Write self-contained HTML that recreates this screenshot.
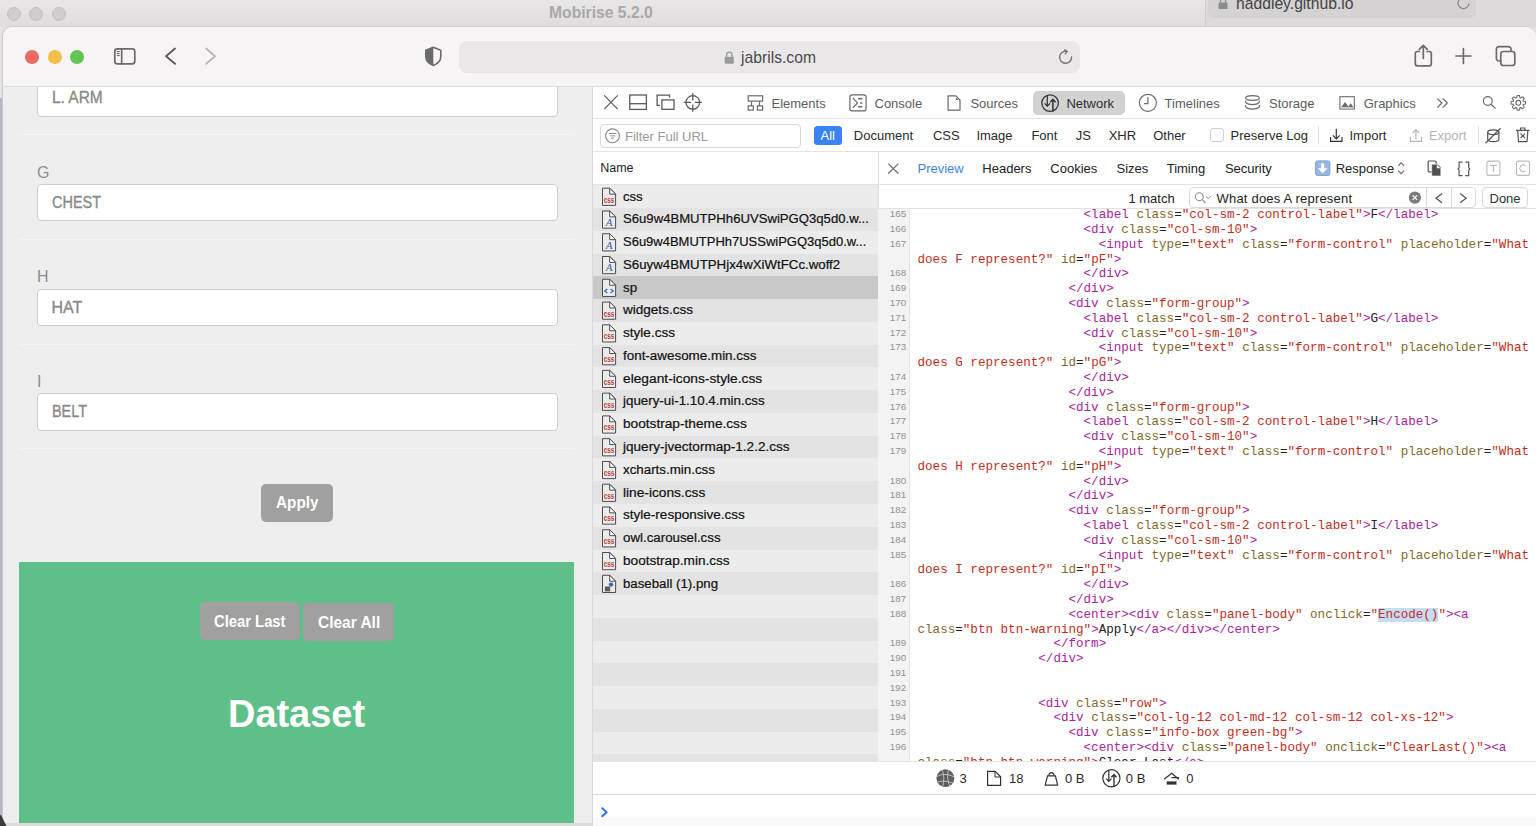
<!DOCTYPE html>
<html><head><meta charset="utf-8">
<style>
*{box-sizing:border-box;margin:0;padding:0}
html,body{width:1536px;height:826px;overflow:hidden;background:#e4e2e3;font-family:"Liberation Sans",sans-serif}
.a{position:absolute}
.t{position:absolute;white-space:pre;line-height:1}
svg{position:absolute;overflow:visible}
.cl{font-family:"Liberation Mono",monospace;font-size:12.58px;line-height:14.8px;height:14.8px;white-space:pre;color:#000}
.cl i{font-style:normal}
.g{color:#a8259b}.n{color:#82692c}.s{color:#c22d22}.x{color:#222}
.hl{background:#c7dbf5}
.ln{font-family:"Liberation Sans",sans-serif;font-size:9.8px;line-height:14.8px;height:14.8px;text-align:right;color:#929292;padding-top:0.3px}

</style></head><body>
<!-- background window title bar -->
<div class="a" style="left:0;top:0;width:1536px;height:27px;background:linear-gradient(#e8e6e7,#dedcdd)"></div>
<div class="a" style="left:7px;top:7px;width:14px;height:14px;border-radius:50%;background:#cfcdce;border:0.5px solid #c2c0c1"></div>
<div class="a" style="left:29px;top:7px;width:14px;height:14px;border-radius:50%;background:#cfcdce;border:0.5px solid #c2c0c1"></div>
<div class="a" style="left:52px;top:7px;width:14px;height:14px;border-radius:50%;background:#cfcdce;border:0.5px solid #c2c0c1"></div>
<div class="t" style="left:549px;top:5px;font-size:15.7px;font-weight:bold;color:#a9a8a8">Mobirise 5.2.0</div>
<!-- haddley window behind -->
<div class="a" style="left:1205px;top:-20px;width:340px;height:47px;border-radius:0 0 0 0;background:#dcdadb;border-left:1px solid #cfcdce"></div>
<div class="a" style="left:1208px;top:-8px;width:268px;height:25.5px;border-radius:6px;background:#d4d2d3"></div>
<div class="t" style="left:1236px;top:-4.4px;font-size:15.7px;color:#444">haddley.github.io</div>

<!-- safari window -->
<div class="a" id="win" style="left:2px;top:26px;width:1534px;height:820px;border-radius:10px 10px 0 0;background:#f8f4f5;border-top:1px solid #d2d0d1;border-left:1px solid #c9c7c8;overflow:hidden">
</div>
<div class="a" style="left:0;top:98px;width:2px;height:728px;background:#b4b8c2"></div>
<!-- traffic lights -->
<div class="a" style="left:25px;top:50px;width:14px;height:14px;border-radius:50%;background:#ec6a5e"></div>
<div class="a" style="left:47.5px;top:50px;width:14px;height:14px;border-radius:50%;background:#f3bf4f"></div>
<div class="a" style="left:70.3px;top:50px;width:14px;height:14px;border-radius:50%;background:#61c454"></div>

<!-- url bar -->
<div class="a" style="left:459px;top:41px;width:621px;height:32px;border-radius:8px;background:#eae7e8"></div>
<div class="t" style="left:741px;top:49.8px;font-size:15.7px;color:#4a4a4a">jabrils.com</div>



<!-- toolbar icons -->
<svg width="1536" height="90" style="left:0;top:0" viewBox="0 0 1536 90">
<g fill="none" stroke="#6b6b6b" stroke-width="1.7" stroke-linecap="round" stroke-linejoin="round">
<rect x="114.8" y="48.8" width="20" height="15" rx="2.5"/>
<line x1="121.7" y1="49" x2="121.7" y2="64"/>
<path d="M117.2 51.6h2.2M117.2 53.6h2.2M117.2 55.6h2.2" stroke-width="1"/>
<path d="M175 48.5L166 56.2L175 63.8" stroke="#5a5a5a" stroke-width="1.8"/>
<path d="M206.2 48.5L215 56.2L206.2 63.8" stroke="#b7b5b6" stroke-width="1.8"/>
<path d="M1066.6 51.3 A6 6 0 1 0 1071.6 57" stroke-width="1.4" stroke="#777"/>
<path d="M1064.6 49.8L1067.2 51.4L1065.4 53.8" stroke-width="1.4" stroke="#777"/>
<path d="M1419.5 51.5h-2.2a2 2 0 0 0-2 2v10.3a2 2 0 0 0 2 2h12a2 2 0 0 0 2-2v-10.3a2 2 0 0 0-2-2h-2.2"/>
<path d="M1423.3 58.3V45.5M1419.3 49.3l4-4l4 4"/>
<path d="M1456 56h14.8M1463.4 48.6v14.8"/>
<path d="M1500.6 61h-1.6a2.6 2.6 0 0 1-2.6-2.6v-9.2a2.6 2.6 0 0 1 2.6-2.6h9.4a2.6 2.6 0 0 1 2.6 2.6v2"/>
<rect x="1500.8" y="51.5" width="14" height="14" rx="2.6"/>
</g>
<path d="M433.3 47.3 L425.8 50.2 V56.5 C425.8 61 429 63.8 433.3 65.6 C437.6 63.8 440.8 61 440.8 56.5 V50.2 Z" fill="none" stroke="#6b6b6b" stroke-width="1.6" stroke-linejoin="round"/>
<path d="M433.3 47.3 L425.8 50.2 V56.5 C425.8 61 429 63.8 433.3 65.6 Z" fill="#6b6b6b"/>
<rect x="724.7" y="56.7" width="9.1" height="7.1" rx="1" fill="#9a9a9a"/>
<path d="M726.6 57v-2.2a2.65 2.65 0 0 1 5.3 0V57" fill="none" stroke="#9a9a9a" stroke-width="1.3"/>
<rect x="1218.5" y="2.5" width="9" height="6.5" rx="1" fill="#8c8c8c"/>
<path d="M1220.5 2.5v-2a2.5 2.5 0 0 1 5 0V2.5" fill="none" stroke="#8c8c8c" stroke-width="1.2"/>
<path d="M1466.6 -1.5 A5.5 5.5 0 1 0 1469 3.5" fill="none" stroke-width="1.3" stroke="#8c8c8c"/>
</svg>

<!-- page content -->
<div class="a" style="left:0;top:87px;width:592px;height:739px;overflow:hidden"><div class="a" style="left:0;top:-87px;width:592px;height:826px">
<div class="a" style="left:3px;top:87px;width:589px;height:739px;background:#eeeeee;overflow:hidden"></div>
<div class="a" style="left:37px;top:79.3px;width:520.5px;height:37.5px;background:#fff;border:1px solid #cdcdcd;border-radius:4px"></div>
<div class="a" style="left:37px;top:183.9px;width:520.5px;height:37.5px;background:#fff;border:1px solid #cdcdcd;border-radius:4px"></div>
<div class="a" style="left:37px;top:288.5px;width:520.5px;height:37.5px;background:#fff;border:1px solid #cdcdcd;border-radius:4px"></div>
<div class="a" style="left:37px;top:393.1px;width:520.5px;height:37.5px;background:#fff;border:1px solid #cdcdcd;border-radius:4px"></div>
<div class="a" style="left:19px;top:134px;width:556px;height:1px;background:#f4f4f4"></div>
<div class="a" style="left:19px;top:239px;width:556px;height:1px;background:#f4f4f4"></div>
<div class="a" style="left:19px;top:344px;width:556px;height:1px;background:#f4f4f4"></div>
<div class="a" style="left:19px;top:448px;width:556px;height:1px;background:#f4f4f4"></div>
<div class="t" style="left:51.5px;top:90.1px;font-size:16px;color:#8a8a8a;-webkit-text-stroke:0.35px #8a8a8a;transform:scaleX(0.967);transform-origin:0 0">L. ARM</div>
<div class="t" style="left:51.5px;top:194.5px;font-size:16px;color:#8a8a8a;-webkit-text-stroke:0.35px #8a8a8a;transform:scaleX(0.904);transform-origin:0 0">CHEST</div>
<div class="t" style="left:51.5px;top:299.7px;font-size:16px;color:#8a8a8a;-webkit-text-stroke:0.35px #8a8a8a;transform:scaleX(1.0);transform-origin:0 0">HAT</div>
<div class="t" style="left:51.5px;top:404.4px;font-size:16px;color:#8a8a8a;-webkit-text-stroke:0.35px #8a8a8a;transform:scaleX(0.9);transform-origin:0 0">BELT</div>
<div class="t" style="left:37px;top:164.8px;font-size:16px;color:#8f8f8f">G</div>
<div class="t" style="left:37px;top:269.4px;font-size:16px;color:#8f8f8f">H</div>
<div class="t" style="left:37px;top:373.7px;font-size:16px;color:#8f8f8f">I</div>
<div class="a" style="left:261px;top:483.5px;width:72px;height:38.4px;background:#a0a0a0;border-radius:5px"></div>
<div class="t" style="left:275.7px;top:494.3px;font-size:17px;color:#fff;font-weight:bold;transform:scaleX(0.9);transform-origin:0 0">Apply</div>
<div class="a" style="left:19.4px;top:562.1px;width:555px;height:261.3px;background:#5ec088"></div>
<div class="a" style="left:200px;top:602px;width:100px;height:38px;background:#a0a0a0;border-radius:5px"></div>
<div class="a" style="left:303.2px;top:603px;width:91px;height:38.4px;background:#a0a0a0;border-radius:5px"></div>
<div class="t" style="left:214.3px;top:612.8px;font-size:17px;color:#fff;font-weight:bold;transform:scaleX(0.87);transform-origin:0 0">Clear Last</div>
<div class="t" style="left:318px;top:613.9px;font-size:17px;color:#fff;font-weight:bold;transform:scaleX(0.91);transform-origin:0 0">Clear All</div>
<div class="t" style="left:228px;top:695px;font-size:38.5px;color:#fff;font-weight:bold;transform:scaleX(0.985);transform-origin:0 0">Dataset</div>
<div class="a" style="left:3px;top:823.4px;width:589px;height:3px;background:#dcdadb"></div>

</div></div>
<div class="a" style="left:2px;top:86px;width:1534px;height:1px;background:#dedcdc"></div>
<!-- devtools -->
<div class="a" style="left:592px;top:87px;width:944px;height:739px;background:#fff;border-left:1px solid #d9d9d9"></div>
<div class="a" style="left:593px;top:118px;width:943px;height:1px;background:#e3e3e3"></div>
<div class="a" style="left:593px;top:151px;width:943px;height:1px;background:#e3e3e3"></div>
<div class="a" style="left:593px;top:184px;width:285px;height:1px;background:#e3e3e3"></div>
<div class="a" style="left:878px;top:184px;width:658px;height:1px;background:#e3e3e3"></div>
<div class="a" style="left:878px;top:208.3px;width:658px;height:1px;background:#e3e3e3"></div>
<div class="a" style="left:1032.5px;top:91.4px;width:92.3px;height:23.2px;background:#d2d2d2;border-radius:5px"></div>
<div class="t" style="left:771.5px;top:96.80px;font-size:13px;color:#5c5c5c;">Elements</div>
<div class="t" style="left:874.5px;top:96.80px;font-size:13px;color:#5c5c5c;">Console</div>
<div class="t" style="left:970.4px;top:96.80px;font-size:13px;color:#5c5c5c;">Sources</div>
<div class="t" style="left:1066.4px;top:96.80px;font-size:13px;color:#2e2e2e;">Network</div>
<div class="t" style="left:1164.6px;top:96.80px;font-size:13px;color:#5c5c5c;">Timelines</div>
<div class="t" style="left:1269px;top:96.80px;font-size:13px;color:#5c5c5c;">Storage</div>
<div class="t" style="left:1363.7px;top:96.80px;font-size:13px;color:#5c5c5c;">Graphics</div>
<div class="a" style="left:600px;top:123.7px;width:200.8px;height:24px;border:1px solid #d8d8d8;border-radius:4px;background:#fff"></div>
<div class="t" style="left:625px;top:129.70px;font-size:13px;color:#9a9a9a;">Filter Full URL</div>
<div class="a" style="left:813.5px;top:126px;width:28.3px;height:18.8px;background:#3b82f7;border-radius:3.5px"></div>
<div class="t" style="left:820.5px;top:128.50px;font-size:13px;color:#fff">All</div>
<div class="t" style="left:853.8px;top:128.50px;font-size:13px;color:#2a2a2a;">Document</div>
<div class="t" style="left:932.9px;top:128.50px;font-size:13px;color:#2a2a2a;">CSS</div>
<div class="t" style="left:976.4px;top:128.50px;font-size:13px;color:#2a2a2a;">Image</div>
<div class="t" style="left:1031.4px;top:128.50px;font-size:13px;color:#2a2a2a;">Font</div>
<div class="t" style="left:1075.7px;top:128.50px;font-size:13px;color:#2a2a2a;">JS</div>
<div class="t" style="left:1108.7px;top:128.50px;font-size:13px;color:#2a2a2a;">XHR</div>
<div class="t" style="left:1153.2px;top:128.50px;font-size:13px;color:#2a2a2a;">Other</div>
<div class="t" style="left:1230.6px;top:128.50px;font-size:13px;color:#2a2a2a;">Preserve Log</div>
<div class="t" style="left:1349.5px;top:128.50px;font-size:13px;color:#2a2a2a;">Import</div>
<div class="t" style="left:1428.9px;top:128.50px;font-size:13px;color:#b3b3b3;">Export</div>
<div class="a" style="left:1210.3px;top:128.2px;width:14px;height:14px;border:1px solid #d0d0d0;border-radius:3px;background:#fff"></div>
<div class="a" style="left:1318px;top:126.3px;width:1px;height:18px;background:#dcdcdc"></div>
<div class="a" style="left:1477.5px;top:126.3px;width:1px;height:18px;background:#dcdcdc"></div>
<div class="t" style="left:600.2px;top:162.32px;font-size:12.5px;color:#1f1f1f;">Name</div>
<div class="t" style="left:917.5px;top:161.80px;font-size:13px;color:#3f82ee;">Preview</div>
<div class="t" style="left:982.3px;top:161.80px;font-size:13px;color:#222;">Headers</div>
<div class="t" style="left:1050.3px;top:161.80px;font-size:13px;color:#222;">Cookies</div>
<div class="t" style="left:1116.5px;top:161.80px;font-size:13px;color:#222;">Sizes</div>
<div class="t" style="left:1166.7px;top:161.80px;font-size:13px;color:#222;">Timing</div>
<div class="t" style="left:1224.9px;top:161.80px;font-size:13px;color:#222;">Security</div>
<div class="t" style="left:1335.7px;top:161.80px;font-size:13px;color:#222;">Response</div>
<div class="t" style="left:1128.4px;top:191.50px;font-size:13px;color:#222;">1 match</div>
<div class="a" style="left:1188.6px;top:187.4px;width:287px;height:20.4px;border:1px solid #dadada;border-radius:4px;background:#fff"></div>
<div class="a" style="left:1426.3px;top:187.4px;width:1px;height:20.4px;background:#dadada"></div>
<div class="a" style="left:1450.5px;top:187.4px;width:1px;height:20.4px;background:#dadada"></div>
<div class="t" style="left:1216.5px;top:191.50px;font-size:13px;color:#222;letter-spacing:0.2px">What does A represent</div>
<div class="a" style="left:1481.5px;top:187.4px;width:46.2px;height:20.4px;border:1px solid #dadada;border-radius:4px;background:#fff"></div>
<div class="t" style="left:1489.5px;top:191.50px;font-size:13px;color:#333;">Done</div>
<div class="a" style="left:593px;top:761.3px;width:943px;height:1px;background:#e3e3e3"></div>
<div class="a" style="left:593px;top:794.3px;width:943px;height:1px;background:#dcdcdc"></div>
<div class="t" style="left:959.6px;top:772.00px;font-size:13px;color:#2a2a2a;">3</div>
<div class="t" style="left:1009.1px;top:772.00px;font-size:13px;color:#2a2a2a;">18</div>
<div class="t" style="left:1065px;top:772.00px;font-size:13px;color:#2a2a2a;">0 B</div>
<div class="t" style="left:1125.8px;top:772.00px;font-size:13px;color:#2a2a2a;">0 B</div>
<div class="t" style="left:1186.2px;top:772.00px;font-size:13px;color:#2a2a2a;">0</div>

<div class="a" style="left:877.5px;top:151px;width:1px;height:610.5px;background:#dedede"></div>
<!-- code -->
<div class="a" style="left:878px;top:209px;width:658px;height:552.3px;overflow:hidden;background:#fff">
<div class="a" style="left:0;top:0;width:31.5px;height:560px;background:#f3f3f3;border-right:1px solid #e6e6e6"></div>
<div class="a" id="code" style="left:39.5px;top:-0.8px">
<div class="cl">                      <i class="g">&lt;label </i><i class="n">class</i><i class="x">=</i><i class="s">&quot;col-sm-2 control-label&quot;</i><i class="g">&gt;</i><i class="x">F</i><i class="g">&lt;/label&gt;</i></div>
<div class="cl">                      <i class="g">&lt;div </i><i class="n">class</i><i class="x">=</i><i class="s">&quot;col-sm-10&quot;</i><i class="g">&gt;</i></div>
<div class="cl">                        <i class="g">&lt;input </i><i class="n">type</i><i class="x">=</i><i class="s">&quot;text&quot;</i> <i class="n">class</i><i class="x">=</i><i class="s">&quot;form-control&quot;</i> <i class="n">placeholder</i><i class="x">=</i><i class="s">&quot;What</i></div>
<div class="cl"><i class="s">does F represent?&quot;</i> <i class="n">id</i><i class="x">=</i><i class="s">&quot;pF&quot;</i><i class="g">&gt;</i></div>
<div class="cl">                      <i class="g">&lt;/div&gt;</i></div>
<div class="cl">                    <i class="g">&lt;/div&gt;</i></div>
<div class="cl">                    <i class="g">&lt;div </i><i class="n">class</i><i class="x">=</i><i class="s">&quot;form-group&quot;</i><i class="g">&gt;</i></div>
<div class="cl">                      <i class="g">&lt;label </i><i class="n">class</i><i class="x">=</i><i class="s">&quot;col-sm-2 control-label&quot;</i><i class="g">&gt;</i><i class="x">G</i><i class="g">&lt;/label&gt;</i></div>
<div class="cl">                      <i class="g">&lt;div </i><i class="n">class</i><i class="x">=</i><i class="s">&quot;col-sm-10&quot;</i><i class="g">&gt;</i></div>
<div class="cl">                        <i class="g">&lt;input </i><i class="n">type</i><i class="x">=</i><i class="s">&quot;text&quot;</i> <i class="n">class</i><i class="x">=</i><i class="s">&quot;form-control&quot;</i> <i class="n">placeholder</i><i class="x">=</i><i class="s">&quot;What</i></div>
<div class="cl"><i class="s">does G represent?&quot;</i> <i class="n">id</i><i class="x">=</i><i class="s">&quot;pG&quot;</i><i class="g">&gt;</i></div>
<div class="cl">                      <i class="g">&lt;/div&gt;</i></div>
<div class="cl">                    <i class="g">&lt;/div&gt;</i></div>
<div class="cl">                    <i class="g">&lt;div </i><i class="n">class</i><i class="x">=</i><i class="s">&quot;form-group&quot;</i><i class="g">&gt;</i></div>
<div class="cl">                      <i class="g">&lt;label </i><i class="n">class</i><i class="x">=</i><i class="s">&quot;col-sm-2 control-label&quot;</i><i class="g">&gt;</i><i class="x">H</i><i class="g">&lt;/label&gt;</i></div>
<div class="cl">                      <i class="g">&lt;div </i><i class="n">class</i><i class="x">=</i><i class="s">&quot;col-sm-10&quot;</i><i class="g">&gt;</i></div>
<div class="cl">                        <i class="g">&lt;input </i><i class="n">type</i><i class="x">=</i><i class="s">&quot;text&quot;</i> <i class="n">class</i><i class="x">=</i><i class="s">&quot;form-control&quot;</i> <i class="n">placeholder</i><i class="x">=</i><i class="s">&quot;What</i></div>
<div class="cl"><i class="s">does H represent?&quot;</i> <i class="n">id</i><i class="x">=</i><i class="s">&quot;pH&quot;</i><i class="g">&gt;</i></div>
<div class="cl">                      <i class="g">&lt;/div&gt;</i></div>
<div class="cl">                    <i class="g">&lt;/div&gt;</i></div>
<div class="cl">                    <i class="g">&lt;div </i><i class="n">class</i><i class="x">=</i><i class="s">&quot;form-group&quot;</i><i class="g">&gt;</i></div>
<div class="cl">                      <i class="g">&lt;label </i><i class="n">class</i><i class="x">=</i><i class="s">&quot;col-sm-2 control-label&quot;</i><i class="g">&gt;</i><i class="x">I</i><i class="g">&lt;/label&gt;</i></div>
<div class="cl">                      <i class="g">&lt;div </i><i class="n">class</i><i class="x">=</i><i class="s">&quot;col-sm-10&quot;</i><i class="g">&gt;</i></div>
<div class="cl">                        <i class="g">&lt;input </i><i class="n">type</i><i class="x">=</i><i class="s">&quot;text&quot;</i> <i class="n">class</i><i class="x">=</i><i class="s">&quot;form-control&quot;</i> <i class="n">placeholder</i><i class="x">=</i><i class="s">&quot;What</i></div>
<div class="cl"><i class="s">does I represent?&quot;</i> <i class="n">id</i><i class="x">=</i><i class="s">&quot;pI&quot;</i><i class="g">&gt;</i></div>
<div class="cl">                      <i class="g">&lt;/div&gt;</i></div>
<div class="cl">                    <i class="g">&lt;/div&gt;</i></div>
<div class="cl">                    <i class="g">&lt;center&gt;&lt;div </i><i class="n">class</i><i class="x">=</i><i class="s">&quot;panel-body&quot;</i> <i class="n">onclick</i><i class="x">=</i><i class="s">&quot;</i><i class="s hl">Encode()</i><i class="s">&quot;</i><i class="g">&gt;&lt;a</i></div>
<div class="cl"><i class="n">class</i><i class="x">=</i><i class="s">&quot;btn btn-warning&quot;</i><i class="g">&gt;</i><i class="x">Apply</i><i class="g">&lt;/a&gt;&lt;/div&gt;&lt;/center&gt;</i></div>
<div class="cl">                  <i class="g">&lt;/form&gt;</i></div>
<div class="cl">                <i class="g">&lt;/div&gt;</i></div>
<div class="cl"></div>
<div class="cl"></div>
<div class="cl">                <i class="g">&lt;div </i><i class="n">class</i><i class="x">=</i><i class="s">&quot;row&quot;</i><i class="g">&gt;</i></div>
<div class="cl">                  <i class="g">&lt;div </i><i class="n">class</i><i class="x">=</i><i class="s">&quot;col-lg-12 col-md-12 col-sm-12 col-xs-12&quot;</i><i class="g">&gt;</i></div>
<div class="cl">                    <i class="g">&lt;div </i><i class="n">class</i><i class="x">=</i><i class="s">&quot;info-box green-bg&quot;</i><i class="g">&gt;</i></div>
<div class="cl">                      <i class="g">&lt;center&gt;&lt;div </i><i class="n">class</i><i class="x">=</i><i class="s">&quot;panel-body&quot;</i> <i class="n">onclick</i><i class="x">=</i><i class="s">&quot;ClearLast()&quot;</i><i class="g">&gt;&lt;a</i></div>
<div class="cl"><i class="n">class</i><i class="x">=</i><i class="s">&quot;btn btn-warning&quot;</i><i class="g">&gt;</i><i class="x">Clear Last</i><i class="g">&lt;/a&gt;</i></div>
</div>
<div class="a" style="left:0;top:-2.1px;width:28.2px">
<div class="ln">165</div>
<div class="ln">166</div>
<div class="ln">167</div>
<div class="ln"></div>
<div class="ln">168</div>
<div class="ln">169</div>
<div class="ln">170</div>
<div class="ln">171</div>
<div class="ln">172</div>
<div class="ln">173</div>
<div class="ln"></div>
<div class="ln">174</div>
<div class="ln">175</div>
<div class="ln">176</div>
<div class="ln">177</div>
<div class="ln">178</div>
<div class="ln">179</div>
<div class="ln"></div>
<div class="ln">180</div>
<div class="ln">181</div>
<div class="ln">182</div>
<div class="ln">183</div>
<div class="ln">184</div>
<div class="ln">185</div>
<div class="ln"></div>
<div class="ln">186</div>
<div class="ln">187</div>
<div class="ln">188</div>
<div class="ln"></div>
<div class="ln">189</div>
<div class="ln">190</div>
<div class="ln">191</div>
<div class="ln">192</div>
<div class="ln">193</div>
<div class="ln">194</div>
<div class="ln">195</div>
<div class="ln">196</div>
<div class="ln"></div>
</div>
</div>
<div class="a" style="left:593px;top:816.5px;width:943px;height:10px;background:#fafafa"></div>
<!-- name list -->
<div class="a" style="left:593px;top:185px;width:284.5px;height:576.3px;overflow:hidden">
<div class="a" style="left:0;top:0.20px;width:285px;height:23.07px;background:#ececec"></div>
<div class="a" style="left:0;top:22.97px;width:285px;height:23.07px;background:#e3e3e3"></div>
<div class="a" style="left:0;top:45.74px;width:285px;height:23.07px;background:#ececec"></div>
<div class="a" style="left:0;top:68.51px;width:285px;height:23.07px;background:#e3e3e3"></div>
<div class="a" style="left:0;top:91.28px;width:285px;height:23.07px;background:#c8c8c8"></div>
<div class="a" style="left:0;top:114.05px;width:285px;height:23.07px;background:#e3e3e3"></div>
<div class="a" style="left:0;top:136.82px;width:285px;height:23.07px;background:#ececec"></div>
<div class="a" style="left:0;top:159.59px;width:285px;height:23.07px;background:#e3e3e3"></div>
<div class="a" style="left:0;top:182.36px;width:285px;height:23.07px;background:#ececec"></div>
<div class="a" style="left:0;top:205.13px;width:285px;height:23.07px;background:#e3e3e3"></div>
<div class="a" style="left:0;top:227.90px;width:285px;height:23.07px;background:#ececec"></div>
<div class="a" style="left:0;top:250.67px;width:285px;height:23.07px;background:#e3e3e3"></div>
<div class="a" style="left:0;top:273.44px;width:285px;height:23.07px;background:#ececec"></div>
<div class="a" style="left:0;top:296.21px;width:285px;height:23.07px;background:#e3e3e3"></div>
<div class="a" style="left:0;top:318.98px;width:285px;height:23.07px;background:#ececec"></div>
<div class="a" style="left:0;top:341.75px;width:285px;height:23.07px;background:#e3e3e3"></div>
<div class="a" style="left:0;top:364.52px;width:285px;height:23.07px;background:#ececec"></div>
<div class="a" style="left:0;top:387.29px;width:285px;height:23.07px;background:#e3e3e3"></div>
<div class="a" style="left:0;top:410.06px;width:285px;height:23.07px;background:#ececec"></div>
<div class="a" style="left:0;top:432.83px;width:285px;height:23.07px;background:#e3e3e3"></div>
<div class="a" style="left:0;top:455.60px;width:285px;height:23.07px;background:#ececec"></div>
<div class="a" style="left:0;top:478.37px;width:285px;height:23.07px;background:#e3e3e3"></div>
<div class="a" style="left:0;top:501.14px;width:285px;height:23.07px;background:#ececec"></div>
<div class="a" style="left:0;top:523.91px;width:285px;height:23.07px;background:#e3e3e3"></div>
<div class="a" style="left:0;top:546.68px;width:285px;height:23.07px;background:#ececec"></div>
<div class="a" style="left:0;top:569.45px;width:285px;height:23.07px;background:#e3e3e3"></div>
</div>
<div class="t" style="left:622.8px;top:190.52px;font-size:12.5px;color:#111;-webkit-text-stroke:0.2px #111;transform:scaleX(1.050);transform-origin:0 0">css</div>
<div class="t" style="left:622.8px;top:213.29px;font-size:12.5px;color:#111;-webkit-text-stroke:0.2px #111;transform:scaleX(1.050);transform-origin:0 0">S6u9w4BMUTPHh6UVSwiPGQ3q5d0.w...</div>
<div class="t" style="left:622.8px;top:236.06px;font-size:12.5px;color:#111;-webkit-text-stroke:0.2px #111;transform:scaleX(1.039);transform-origin:0 0">S6u9w4BMUTPHh7USSwiPGQ3q5d0.w...</div>
<div class="t" style="left:622.8px;top:258.83px;font-size:12.5px;color:#111;-webkit-text-stroke:0.2px #111;transform:scaleX(1.061);transform-origin:0 0">S6uyw4BMUTPHjx4wXiWtFCc.woff2</div>
<div class="t" style="left:622.8px;top:281.60px;font-size:12.5px;color:#111;-webkit-text-stroke:0.2px #111;transform:scaleX(1.070);transform-origin:0 0">sp</div>
<div class="t" style="left:622.8px;top:304.37px;font-size:12.5px;color:#111;-webkit-text-stroke:0.2px #111;transform:scaleX(1.083);transform-origin:0 0">widgets.css</div>
<div class="t" style="left:622.8px;top:327.14px;font-size:12.5px;color:#111;-webkit-text-stroke:0.2px #111;transform:scaleX(1.085);transform-origin:0 0">style.css</div>
<div class="t" style="left:622.8px;top:349.91px;font-size:12.5px;color:#111;-webkit-text-stroke:0.2px #111;transform:scaleX(1.073);transform-origin:0 0">font-awesome.min.css</div>
<div class="t" style="left:622.8px;top:372.68px;font-size:12.5px;color:#111;-webkit-text-stroke:0.2px #111;transform:scaleX(1.101);transform-origin:0 0">elegant-icons-style.css</div>
<div class="t" style="left:622.8px;top:395.45px;font-size:12.5px;color:#111;-webkit-text-stroke:0.2px #111;transform:scaleX(1.068);transform-origin:0 0">jquery-ui-1.10.4.min.css</div>
<div class="t" style="left:622.8px;top:418.22px;font-size:12.5px;color:#111;-webkit-text-stroke:0.2px #111;transform:scaleX(1.093);transform-origin:0 0">bootstrap-theme.css</div>
<div class="t" style="left:622.8px;top:440.99px;font-size:12.5px;color:#111;-webkit-text-stroke:0.2px #111;transform:scaleX(1.085);transform-origin:0 0">jquery-jvectormap-1.2.2.css</div>
<div class="t" style="left:622.8px;top:463.76px;font-size:12.5px;color:#111;-webkit-text-stroke:0.2px #111;transform:scaleX(1.067);transform-origin:0 0">xcharts.min.css</div>
<div class="t" style="left:622.8px;top:486.53px;font-size:12.5px;color:#111;-webkit-text-stroke:0.2px #111;transform:scaleX(1.096);transform-origin:0 0">line-icons.css</div>
<div class="t" style="left:622.8px;top:509.30px;font-size:12.5px;color:#111;-webkit-text-stroke:0.2px #111;transform:scaleX(1.083);transform-origin:0 0">style-responsive.css</div>
<div class="t" style="left:622.8px;top:532.07px;font-size:12.5px;color:#111;-webkit-text-stroke:0.2px #111;transform:scaleX(1.064);transform-origin:0 0">owl.carousel.css</div>
<div class="t" style="left:622.8px;top:554.84px;font-size:12.5px;color:#111;-webkit-text-stroke:0.2px #111;transform:scaleX(1.089);transform-origin:0 0">bootstrap.min.css</div>
<div class="t" style="left:622.8px;top:577.61px;font-size:12.5px;color:#111;-webkit-text-stroke:0.2px #111;transform:scaleX(1.060);transform-origin:0 0">baseball (1).png</div>
<svg width="1536" height="826" style="left:0;top:0" viewBox="0 0 1536 826">
<defs>
<g id="doc"><path d="M0.5 0.5H7.7L13.6 6.4V17.7H0.5Z" fill="#ebebeb" stroke="#4d4d4d" stroke-width="1" stroke-linejoin="miter"/><path d="M7.7 0.5V6.4H13.6Z" fill="#fff" stroke="#4d4d4d" stroke-width="1" stroke-linejoin="miter"/></g>
</defs>
<use href="#doc" x="602" y="187.70"/>
<text x="609" y="202.70" font-family="Liberation Sans" font-size="8.6" font-weight="bold" fill="#bb3b3b" text-anchor="middle" textLength="10.6" lengthAdjust="spacingAndGlyphs">css</text>
<use href="#doc" x="602" y="210.47"/>
<text x="609" y="225.77" font-family="Liberation Serif" font-size="11" font-style="italic" fill="#3b5fa8" text-anchor="middle">A</text>
<use href="#doc" x="602" y="233.24"/>
<text x="609" y="248.54" font-family="Liberation Serif" font-size="11" font-style="italic" fill="#3b5fa8" text-anchor="middle">A</text>
<use href="#doc" x="602" y="256.01"/>
<text x="609" y="271.31" font-family="Liberation Serif" font-size="11" font-style="italic" fill="#3b5fa8" text-anchor="middle">A</text>
<use href="#doc" x="602" y="278.78"/>
<path d="M607.3 288.97999999999996L604.8 290.97999999999996L607.3 292.97999999999996M610.6 288.97999999999996L613.1 290.97999999999996L610.6 292.97999999999996" fill="none" stroke="#3d6bd1" stroke-width="1.4"/>
<use href="#doc" x="602" y="301.55"/>
<text x="609" y="316.55" font-family="Liberation Sans" font-size="8.6" font-weight="bold" fill="#bb3b3b" text-anchor="middle" textLength="10.6" lengthAdjust="spacingAndGlyphs">css</text>
<use href="#doc" x="602" y="324.32"/>
<text x="609" y="339.32" font-family="Liberation Sans" font-size="8.6" font-weight="bold" fill="#bb3b3b" text-anchor="middle" textLength="10.6" lengthAdjust="spacingAndGlyphs">css</text>
<use href="#doc" x="602" y="347.09"/>
<text x="609" y="362.09" font-family="Liberation Sans" font-size="8.6" font-weight="bold" fill="#bb3b3b" text-anchor="middle" textLength="10.6" lengthAdjust="spacingAndGlyphs">css</text>
<use href="#doc" x="602" y="369.86"/>
<text x="609" y="384.86" font-family="Liberation Sans" font-size="8.6" font-weight="bold" fill="#bb3b3b" text-anchor="middle" textLength="10.6" lengthAdjust="spacingAndGlyphs">css</text>
<use href="#doc" x="602" y="392.63"/>
<text x="609" y="407.63" font-family="Liberation Sans" font-size="8.6" font-weight="bold" fill="#bb3b3b" text-anchor="middle" textLength="10.6" lengthAdjust="spacingAndGlyphs">css</text>
<use href="#doc" x="602" y="415.40"/>
<text x="609" y="430.40" font-family="Liberation Sans" font-size="8.6" font-weight="bold" fill="#bb3b3b" text-anchor="middle" textLength="10.6" lengthAdjust="spacingAndGlyphs">css</text>
<use href="#doc" x="602" y="438.17"/>
<text x="609" y="453.17" font-family="Liberation Sans" font-size="8.6" font-weight="bold" fill="#bb3b3b" text-anchor="middle" textLength="10.6" lengthAdjust="spacingAndGlyphs">css</text>
<use href="#doc" x="602" y="460.94"/>
<text x="609" y="475.94" font-family="Liberation Sans" font-size="8.6" font-weight="bold" fill="#bb3b3b" text-anchor="middle" textLength="10.6" lengthAdjust="spacingAndGlyphs">css</text>
<use href="#doc" x="602" y="483.71"/>
<text x="609" y="498.71" font-family="Liberation Sans" font-size="8.6" font-weight="bold" fill="#bb3b3b" text-anchor="middle" textLength="10.6" lengthAdjust="spacingAndGlyphs">css</text>
<use href="#doc" x="602" y="506.48"/>
<text x="609" y="521.48" font-family="Liberation Sans" font-size="8.6" font-weight="bold" fill="#bb3b3b" text-anchor="middle" textLength="10.6" lengthAdjust="spacingAndGlyphs">css</text>
<use href="#doc" x="602" y="529.25"/>
<text x="609" y="544.25" font-family="Liberation Sans" font-size="8.6" font-weight="bold" fill="#bb3b3b" text-anchor="middle" textLength="10.6" lengthAdjust="spacingAndGlyphs">css</text>
<use href="#doc" x="602" y="552.02"/>
<text x="609" y="567.02" font-family="Liberation Sans" font-size="8.6" font-weight="bold" fill="#bb3b3b" text-anchor="middle" textLength="10.6" lengthAdjust="spacingAndGlyphs">css</text>
<use href="#doc" x="602" y="574.79"/>
<rect x="604.9" y="586.49" width="5.3" height="4.9" fill="#5e5e5e"/><circle cx="611" cy="584.5899999999999" r="2.1" fill="#3f5eb0" stroke="#6fc37c" stroke-width="0.4"/>
</svg>
<!-- devtools icons -->
<svg width="1536" height="826" style="left:0;top:0" viewBox="0 0 1536 826">
<g fill="none" stroke="#5a5a5a" stroke-width="1.2">
<path d="M604.2 95.3L617.7 109.2M617.7 95.3L604.2 109.2"/>
<rect x="629.8" y="95" width="16.6" height="14.4" stroke-width="1.3"/>
<path d="M629.8 103.7H646.4" stroke-width="1.3"/>
<path d="M669.5 97.8V95.1H657.1V105.3H660" stroke-width="1.3"/>
<rect x="661.9" y="99.9" width="12.1" height="9.4" stroke-width="1.3"/>
<circle cx="692.8" cy="102.4" r="6.8" stroke-width="1.3"/>
<path d="M692.8 93.1V100.2M692.8 104.4V111.7M683.7 102.4H690.9M694.8 102.4H701.9" stroke-width="1.3"/>
</g>
<g fill="none" stroke="#6a6a6a" stroke-width="1.2">
<rect x="748.2" y="95.8" width="14.4" height="5.3"/>
<rect x="748.2" y="105.9" width="5.1" height="4.2"/>
<rect x="757.4" y="105.9" width="5.2" height="4.2"/>
<path d="M751.5 101.2V105.9M759.5 101.2V105.9"/>
<rect x="849.9" y="94.9" width="16.2" height="16" rx="2.2"/>
<path d="M852.8 97.8L857.5 102.9L852.8 107.8"/>
<path d="M858.1 98.75H862.3M860.2 102.9H862.3M858.1 106.8H862.3" stroke-width="1.5"/>
<path d="M948.1 95.9H955.9L960 100.1V110.1H948.1Z"/>
<path d="M955.9 97.5L958.4 100.1H955.9Z" fill="#6a6a6a" stroke="none"/>
<circle cx="1147.9" cy="102.8" r="8.5"/>
<path d="M1147.9 97.3V103.6H1144.1"/>
<ellipse cx="1252.5" cy="98" rx="6.8" ry="2.3"/>
<path d="M1245.7 100.5C1245.5 101.4 1245.6 102.1 1246 102.6C1247.3 104 1249.5 104.6 1252.5 104.6C1255.5 104.6 1257.7 104 1259 102.6C1259.4 102.1 1259.5 101.4 1259.3 100.5"/>
<path d="M1245.7 105C1245.5 105.9 1245.6 106.6 1246 107.1C1247.3 108.5 1249.5 109.1 1252.5 109.1C1255.5 109.1 1257.7 108.5 1259 107.1C1259.4 106.6 1259.5 105.9 1259.3 105"/>
<rect x="1339.9" y="96.7" width="14.4" height="12.3" stroke-width="1.1"/>
<path d="M1437.2 98.4L1441.9 103L1437.2 107.7M1442.6 98.4L1447.3 103L1442.6 107.7"/>
<circle cx="1487.8" cy="101" r="4.4"/>
<path d="M1491 104.2L1495.6 108.6"/>
</g>
<path d="M1341.3 106.9L1345.1 102.1L1348.6 106.9Z M1348 106.9L1350.8 103.2L1353.3 106.9Z" fill="#6a6a6a"/>
<rect x="1340.5" y="106.9" width="13.2" height="1.6" fill="#c8c8c8"/>
<g fill="none" stroke="#333" stroke-width="1.25">
<circle cx="1050.1" cy="103.1" r="8.3"/>
<path d="M1047.3 94.9V106M1044.6 103.4L1047.3 106.2L1050.1 103.4"/>
<path d="M1052.9 99.6V111.3M1050.3 102.2L1052.9 99.4L1055.6 102.2" stroke-width="1.5"/>
</g>
<path d="M1516.75 97.73L1517.03 95.61A7.3 7.3 0 0 1 1519.57 95.61L1519.85 97.73A5.3 5.3 0 0 1 1520.79 98.12L1522.49 96.82A7.3 7.3 0 0 1 1524.28 98.61L1522.98 100.31A5.3 5.3 0 0 1 1523.37 101.25L1525.49 101.53A7.3 7.3 0 0 1 1525.49 104.07L1523.37 104.35A5.3 5.3 0 0 1 1522.98 105.29L1524.28 106.99A7.3 7.3 0 0 1 1522.49 108.78L1520.79 107.48A5.3 5.3 0 0 1 1519.85 107.87L1519.57 109.99A7.3 7.3 0 0 1 1517.03 109.99L1516.75 107.87A5.3 5.3 0 0 1 1515.81 107.48L1514.11 108.78A7.3 7.3 0 0 1 1512.32 106.99L1513.62 105.29A5.3 5.3 0 0 1 1513.23 104.35L1511.11 104.07A7.3 7.3 0 0 1 1511.11 101.53L1513.23 101.25A5.3 5.3 0 0 1 1513.62 100.31L1512.32 98.61A7.3 7.3 0 0 1 1514.11 96.82L1515.81 98.12A5.3 5.3 0 0 1 1516.75 97.73Z" fill="none" stroke="#6a6a6a" stroke-width="1.1" stroke-linejoin="round"/>
<circle cx="1518.3" cy="102.8" r="2.4" fill="none" stroke="#6a6a6a" stroke-width="1.1"/>
<!-- filter row -->
<g fill="none" stroke="#8a8a8a" stroke-width="1.15">
<circle cx="612.5" cy="135.8" r="6.9"/>
<path d="M609 133.45H616.4M610.2 135.9H615.3M611.2 138.2H614" stroke-width="1"/>
</g>
<g fill="none" stroke="#333" stroke-width="1.2">
<path d="M1330.6 136.9V141.3H1342V136.9"/>
<path d="M1336.3 128.7V139M1332.9 135.4L1336.3 138.8L1339.7 135.4"/>
</g>
<g fill="none" stroke="#b5b5b5" stroke-width="1.2">
<path d="M1410.4 136.9V141.3H1421.6V136.9"/>
<path d="M1415.9 139V129.8M1412.5 133.2L1415.9 129.8L1419.3 133.2"/>
</g>
<g fill="none" stroke="#555" stroke-width="1.2">
<ellipse cx="1493.3" cy="132.2" rx="5.6" ry="2.4"/>
<path d="M1487.7 132.2V139.3C1487.7 140.6 1490.2 141.7 1493.3 141.7C1496.4 141.7 1498.9 140.6 1498.9 139.3V132.2"/>
<path d="M1485.5 143.2L1500.6 128.3"/>
<path d="M1516 130.4H1529.4M1520.6 130.2V128H1524.9V130.2M1517.6 130.4L1518.5 141.6H1527L1527.9 130.4M1520.5 133.6L1525 138.2M1525 133.6L1520.5 138.2"/>
</g>
<!-- detail header -->
<path d="M888.2 163.7L898.4 173.5M898.4 163.7L888.2 173.5" stroke="#6a6a6a" stroke-width="1.15" fill="none"/>
<rect x="1315.6" y="160.9" width="14.3" height="14.5" rx="2" fill="#9ab8e2" stroke="#7c9bcb" stroke-width="1"/>
<path d="M1321.2 163.6H1324.2V168.3H1327.6L1322.7 173.3L1317.8 168.3H1321.2Z" fill="#fff"/>
<path d="M1398.2 165.8L1401.1 162.8L1404.1 165.8M1398.2 170.6L1401.1 173.6L1404.1 170.6" fill="none" stroke="#6a6a6a" stroke-width="1.1"/>
<rect x="1428.2" y="161" width="8" height="10.8" rx="1" fill="none" stroke="#555" stroke-width="1.2"/>
<path d="M1431.7 164.2H1437.8L1440.8 167.2V176H1431.7Z" fill="#4f4f4f" stroke="#fff" stroke-width="0.6"/>
<path d="M1436.8 164.6V168.2H1440.4Z" fill="#fff"/>
<path d="M1462.5 162.2H1459.1V167.6L1458.1 168.9L1459.1 170.2V175.6H1462.5M1465.3 162.2H1468.7V167.6L1469.7 168.9L1468.7 170.2V175.6H1465.3" fill="none" stroke="#555" stroke-width="1.2"/>
<rect x="1486.9" y="161.1" width="13" height="14.3" rx="2" fill="none" stroke="#bdbdbd" stroke-width="1.1"/>
<path d="M1489.9 165.4H1497M1493.45 165.4V171.9" fill="none" stroke="#b0b0b0" stroke-width="1"/>
<rect x="1516.5" y="161.1" width="13" height="14.3" rx="2" fill="none" stroke="#bdbdbd" stroke-width="1.1"/>
<path d="M1525.6 165.4A3.6 3.6 0 1 0 1525.6 171.2" fill="none" stroke="#b0b0b0" stroke-width="1"/>
<!-- find bar -->
<g fill="none" stroke="#8a8a8a" stroke-width="1.1">
<circle cx="1199.3" cy="196.7" r="3.9"/>
<path d="M1202.2 199.6L1205.5 203"/>
<path d="M1205.9 196.3L1208.3 198.7L1210.7 196.3" stroke-width="0.9"/>
</g>
<circle cx="1414.9" cy="197.6" r="6.1" fill="#7b7b7b"/>
<path d="M1412.7 195.4L1417.1 199.8M1417.1 195.4L1412.7 199.8" stroke="#fff" stroke-width="1.2"/>
<path d="M1442 193.6L1436 198.2L1442 202.8M1460.1 193.6L1466.1 198.2L1460.1 202.8" fill="none" stroke="#555" stroke-width="1.3"/>
<!-- status bar -->

<circle cx="945.4" cy="778.2" r="8.9" fill="#5d5d5d"/>
<path d="M936.8 776.5C941 774 948 773.5 954 777M942 769.8C944 774 944.5 781 942.5 786.8M948.5 770.2C947 775 947.5 781 950 786.5M937.5 782C942 780.5 948 781 953.5 783.5" fill="none" stroke="#e5e5e5" stroke-width="0.7"/>
<g fill="none" stroke="#333" stroke-width="1.2">
<path d="M987.6 771.4H995.2L1000.6 776.8V785.4H987.6Z"/>
<path d="M995 771.6V777H1000.4" stroke-width="1"/>
<path d="M1045.2 785.2L1047.5 775.8H1055.4L1057.6 785.2Z"/>
<path d="M1048.9 775.8C1048.9 771.5 1054 771.5 1054 775.8"/>
<circle cx="1111.4" cy="778.3" r="8.6"/>
<path d="M1108.8 770.2V781.3M1106.2 778.7L1108.8 781.4L1111.4 778.7"/>
<path d="M1114 774.6V786.8M1111.4 777.2L1114 774.5L1116.6 777.2" stroke-width="1.4"/>
<path d="M1164.2 779.3L1171.6 773.3L1178.9 779.3M1171.6 777.6H1179"/>
<rect x="1166.7" y="781.4" width="9.8" height="3.2" fill="#333" stroke="none"/>
</g>
<path d="M0 814.8C1.6 815 2.6 818.5 6.5 826H0Z" fill="#3a3b3d"/>
<!-- console prompt -->
<path d="M602.3 808.3L606.6 812.2L602.3 816.1" fill="none" stroke="#2f7bf5" stroke-width="2.2" stroke-linecap="round" stroke-linejoin="round"/>
</svg>
</body></html>
